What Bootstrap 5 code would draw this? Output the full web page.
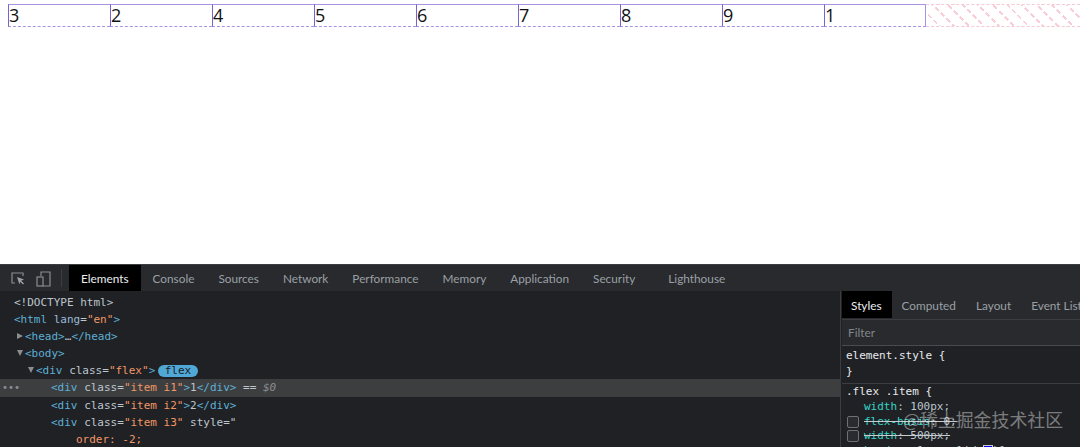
<!DOCTYPE html>
<html lang="en">
<head>
<meta charset="utf-8">
<title>Flex order</title>
<link href="https://cdn.jsdelivr.net/npm/bootstrap@5.3.0/dist/css/bootstrap.min.css" rel="stylesheet">
<style>
html,body{height:447px;overflow:hidden;background:#fff}
body{font-family:"Noto Sans",sans-serif}
.page-zone{height:264px;padding-top:4px;padding-left:8px;background:#fff}
.flex-demo{height:23px}
.flex-fill-hatch{flex:1;height:23px;border-top:1px dashed #f6c9d3;border-bottom:1px dashed #f6c9d3;background:repeating-linear-gradient(135deg,transparent 0 5px,#fff 5px 8px),repeating-linear-gradient(45deg,#fff 0 8.5px,#f8cfd9 8.5px 10.5px)}
.flex-cell{width:102px;height:23px;border:1px solid #a893e2;border-bottom:1px dashed #a893e2;border-left:1px solid #7664d6;border-right:0;font:18px/21px "Open Sans",sans-serif;color:#111}
.flex-cell:nth-child(9){border-right:1px solid #a893e2}
.dev-zone{height:183px;background:#202124;position:relative;overflow:hidden;font-size:12px}
.tabbar{height:28px;background:#292a2d;border-top:1px solid #3c3d40}
.tool-icons{width:69px;height:26px;padding-left:10px;gap:9px}
.tool-sep{width:1px;height:18px;background:#3c3d40}
.dev-tab{padding:0 12px;height:26px;color:#9aa0a6;font:11.8px/28px Lato,sans-serif;white-space:nowrap}
.dev-tab.on{background:#000;color:#eceef0}
.gap-light{margin-left:9px}
.tree{width:841px;border-right:1px solid #3c3d40;font:11px/17.2px "DejaVu Sans Mono",monospace;color:#bdc6cf;padding-top:2.5px;flex:none}
.line{height:17.2px;white-space:pre;position:relative}
.in1{padding-left:14px}.in1c{padding-left:17px}.in2{padding-left:28px}.in4{padding-left:51px}.in5{padding-left:76px}
.line.sel{background:#3d3e40}
.tg{color:#5db0d7}.at{color:#9bbbdc}.av{color:#f29766}.an{color:#bdc6cf}.kw{color:#f29766}
.caret{display:inline-block;width:0;height:0;vertical-align:1px;margin-right:2px}
.caret.r{border-left:6px solid #8a8d91;border-top:3.5px solid transparent;border-bottom:3.5px solid transparent}
.caret.d{border-top:6px solid #8a8d91;border-left:3.5px solid transparent;border-right:3.5px solid transparent}
.pill-flex{background:#4fa8d5;color:#1c2024;border-radius:9px;padding:0 6.5px;font-size:11px;line-height:12px;display:inline-block;margin-left:3px}
.dots{position:absolute;left:2px;top:0;color:#8a8d91;font-size:10px}
.dim{color:#8a8d91;font-style:italic}
.side{flex:1;min-width:0;overflow:hidden;padding-left:1px}
.side-tabs{height:29px;border-bottom:1px solid #3c3d40;background:#292a2d;white-space:nowrap}
.side-tab{padding:0 10px;height:27px;font:11.8px/30px Lato,sans-serif;color:#9aa0a6;white-space:nowrap;flex:none}
.side-tab.on{background:#000;color:#eceef0;padding:0 10px 0 9px}
.side-filter{height:26px;font:11.8px/26px Lato,sans-serif;color:#80868b;padding-left:6px;border-bottom:1px solid #4a4b4e;background:#292a2d}
.rule{font:11px/16px "DejaVu Sans Mono",monospace;color:#e8eaed;padding:2px 0 3px 4px;border-bottom:1px solid #3c3d40;white-space:pre}
.rule.last{border-bottom:0;padding-top:0}
.rule .prop{padding-left:18px;height:14.5px;line-height:14.5px;color:#bdc6cf;position:relative}
.pn{color:#35d4c7}
.struck{text-decoration:line-through;text-decoration-color:#c8ccd0}
.chk{position:absolute;left:1px;top:1px;width:12px;height:12px;border:1px solid #6e7074;border-radius:2px;background:#2a2b2e}
.swatch{display:inline-block;width:10px;height:10px;background:#0000ee;border:1px solid #ccc;vertical-align:-1px}
.mark-wm{position:absolute;left:903px;top:145px;color:rgba(255,255,255,.42);font:17.9px/20px "Noto Sans CJK SC","Noto Sans",sans-serif;white-space:nowrap}
</style>
</head>
<body class="m-0">
<div class="page-zone d-flex align-items-start">
  <div class="flex-demo d-flex flex-fill">
    <div class="flex-cell">3</div><div class="flex-cell">2</div><div class="flex-cell">4</div><div class="flex-cell">5</div><div class="flex-cell">6</div><div class="flex-cell">7</div><div class="flex-cell">8</div><div class="flex-cell">9</div><div class="flex-cell">1</div>
    <div class="flex-fill-hatch"></div>
  </div>
</div>
<div class="dev-zone d-flex flex-column">
  <div class="tabbar d-flex align-items-start flex-none">
    <div class="tool-icons d-flex align-items-center">
      <svg width="16" height="16" viewBox="0 0 16 16" fill="none"><path d="M5 13H2V3h11v3" stroke="#8a8d91" stroke-width="1.2"/><path d="M7 7l7 2.6-2.8 1.1L14 13.6l-1 1-2.8-2.8L9.4 14.6z" fill="#9aa0a6"/></svg>
      <svg width="17" height="17" viewBox="0 0 17 17" fill="none" stroke="#8a8d91" stroke-width="1.2"><path d="M6 6V2h9v14H8"/><rect x="2" y="7" width="6" height="9"/></svg>
      <span class="tool-sep"></span>
    </div>
    <div class="dev-tab on">Elements</div><div class="dev-tab">Console</div><div class="dev-tab">Sources</div><div class="dev-tab">Network</div><div class="dev-tab">Performance</div><div class="dev-tab">Memory</div><div class="dev-tab">Application</div><div class="dev-tab">Security</div><div class="dev-tab gap-light">Lighthouse</div>
  </div>
  <div class="d-flex flex-grow-1">
    <div class="tree">
      <div class="line in1">&lt;!DOCTYPE html&gt;</div>
      <div class="line in1"><span class="tg">&lt;html</span> <span class="at">lang</span>=<span class="av">"en"</span><span class="tg">&gt;</span></div>
      <div class="line in1c"><span class="caret r"></span><span class="tg">&lt;head&gt;</span>…<span class="tg">&lt;/head&gt;</span></div>
      <div class="line in1c"><span class="caret d"></span><span class="tg">&lt;body&gt;</span></div>
      <div class="line in2"><span class="caret d"></span><span class="tg">&lt;div</span> <span class="an">class</span>=<span class="av">"flex"</span><span class="tg">&gt;</span><span class="pill-flex">flex</span></div>
      <div class="line in4 sel"><span class="dots">•••</span><span class="tg">&lt;div</span> <span class="an">class</span>=<span class="av">"item i1"</span><span class="tg">&gt;</span>1<span class="tg">&lt;/div&gt;</span> == <span class="dim">$0</span></div>
      <div class="line in4"><span class="tg">&lt;div</span> <span class="an">class</span>=<span class="av">"item i2"</span><span class="tg">&gt;</span>2<span class="tg">&lt;/div&gt;</span></div>
      <div class="line in4"><span class="tg">&lt;div</span> <span class="an">class</span>=<span class="av">"item i3"</span> <span class="an">style</span>=<span class="an">"</span></div>
      <div class="line in5"><span class="kw">order: -2;</span></div>
    </div>
    <div class="side">
      <div class="side-tabs d-flex"><div class="side-tab on">Styles</div><div class="side-tab">Computed</div><div class="side-tab">Layout</div><div class="side-tab">Event Listeners</div></div>
      <div class="side-filter">Filter</div>
      <div class="rule">element.style {
}</div>
      <div class="rule last">.flex .item {
<div class="prop"><span class="pn">width</span>: 100px;</div><div class="prop"><span class="chk"></span><span class="struck"><span class="pn">flex-basis</span>: 0;</span></div><div class="prop"><span class="chk"></span><span class="struck"><span class="pn">width</span>: 500px;</span></div><div class="prop"><span class="pn">border</span>: 1px solid <span class="swatch"></span>blue;</div></div>
    </div>
  </div>
  <div class="mark-wm">@稀土掘金技术社区</div>
</div>
</body>
</html>
